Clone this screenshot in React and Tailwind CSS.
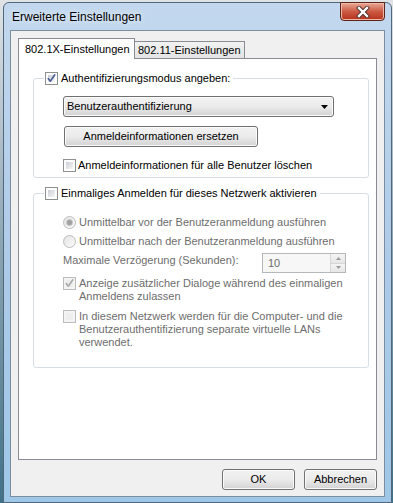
import React from 'react';

function CheckBox({ checked, disabled }) {
  return (
    <span
      className={
        disabled
          ? 'relative flex w-[13px] h-[13px] shrink-0 border border-[#bcbcbc] bg-[#f4f4f4] p-[2px]'
          : 'relative flex w-[13px] h-[13px] shrink-0 border border-[#8e8f8f] bg-white p-[2px]'
      }
    >
      <span
        className={
          disabled
            ? 'flex-1 bg-[#eeeeee]'
            : 'flex-1 bg-gradient-to-br from-[#cbcfd5] to-[#f6f6f6]'
        }
      />
      {checked && (
        <svg className="absolute left-0 top-0 w-[11px] h-[11px]" viewBox="0 0 11 11">
          <path
            d="M2.2 5.6 L4.3 8.2 L8.8 1.8"
            fill="none"
            stroke={disabled ? '#a9a9a9' : '#4a5f97'}
            strokeWidth="1.6"
            strokeLinecap="round"
            strokeLinejoin="round"
          />
        </svg>
      )}
    </span>
  );
}

function Radio({ checked }) {
  return (
    <span className="flex items-center justify-center w-[13px] h-[13px] shrink-0 rounded-full border border-[#bcbcbc] bg-gradient-to-br from-[#e4e4e4] to-[#fbfbfb]">
      {checked && (
        <span className="w-[5px] h-[5px] rounded-full bg-[#a0a0a0] shadow-[0_0_0_1px_#c8c8c8]" />
      )}
    </span>
  );
}

const btn =
  'flex items-center h-[21px] rounded-[3px] border border-[#707070] bg-gradient-to-b from-[#f2f2f2] via-[#ebebeb] to-[#d3d3d3] shadow-[inset_0_0_0_1px_#fbfbfb]';

export default function App() {
  return (
    <div className="w-[393px] h-[503px] overflow-hidden bg-gradient-to-b from-[#dfe3e6] via-[#8aa3b2] to-[#3f7186] pl-[3px] pt-[2px] font-['Liberation_Sans',Arial,sans-serif] text-[11px] text-black leading-none whitespace-nowrap">
      <div className="w-[389px] h-[501px] rounded-t-[6px] border border-[#52667c] bg-gradient-to-b from-[#c3d8ee] via-[#aecbe8] to-[#9ec7e8] flex flex-col px-[6px] pb-[5px]">
        {/* Title bar */}
        <div className="h-[27px] flex justify-between shrink-0">
          <span className="self-center pl-[2px] text-[12px] [text-shadow:0_0_6px_#ffffff]">Erweiterte Einstellungen</span>
          <div className="-mt-[1px] w-[45px] h-[19px] rounded-b-[4px] border border-[#5e2418] bg-gradient-to-b from-[#e7a896] via-[#cc5a43] to-[#b5301a] shadow-[inset_0_0_0_1px_#f0b8a8] flex items-center justify-center">
            <svg width="14" height="12" viewBox="0 0 14 12">
              <path d="M3 2 L11 10 M11 2 L3 10" stroke="#4a3030" strokeWidth="4.2" strokeLinecap="square" />
              <path d="M3 2 L11 10 M11 2 L3 10" stroke="#ffffff" strokeWidth="2.4" strokeLinecap="square" />
            </svg>
          </div>
        </div>

        {/* Client area */}
        <div className="flex-1 border border-[#7d8da0] bg-[#f0f0f0] flex flex-col px-[7px] pt-[7px]">
          {/* Tabs */}
          <div className="h-[20px] flex items-end shrink-0">
            <div className="relative z-10 w-[117px] h-[21px] -mb-[1px] border border-b-0 border-[#898c95] bg-white pl-[6px] flex items-center">
              802.1X-Einstellungen
            </div>
            <div className="w-[110px] h-[17px] border border-l-0 border-b-0 border-[#898c95] bg-gradient-to-b from-[#f2f2f2] to-[#e3e3e3] pl-[3px] flex items-center">
              802.11-Einstellungen
            </div>
          </div>

          {/* Tab page */}
          <div className="h-[402px] shrink-0 border border-[#898c95] bg-white pl-[14px] pt-[12px]">
            <fieldset className="w-[336px] border border-[#d5dfe5] rounded-[3px] pb-[4px]">
              <legend className="ml-[10px] px-[1px] h-[15px] flex items-center gap-[3px]">
                <CheckBox checked />
                <span className="pr-[2px]">Authentifizierungsmodus angeben:</span>
              </legend>
              <div className="pl-[29px] flex flex-col items-start">
                <div className={`${btn} mt-[10px] w-[271px] justify-between pl-[3px] pr-[5px]`}>
                  <span>Benutzerauthentifizierung</span>
                  <svg width="7" height="4" viewBox="0 0 7 4">
                    <path d="M0 0 H7 L3.5 4 Z" fill="#000" />
                  </svg>
                </div>
                <div className={`${btn} mt-[9px] ml-[1px] w-[194px] justify-center`}>Anmeldeinformationen ersetzen</div>
                <div className="mt-[11px] h-[15px] flex items-center gap-[2px]">
                  <CheckBox />
                  <span>Anmeldeinformationen für alle Benutzer löschen</span>
                </div>
              </div>
            </fieldset>

            <fieldset className="mt-[8px] w-[336px] border border-[#d5dfe5] rounded-[3px] pb-[18px]">
              <legend className="ml-[10px] px-[1px] h-[15px] flex items-center gap-[3px]">
                <CheckBox />
                <span className="pr-[2px]">Einmaliges Anmelden für dieses Netzwerk aktivieren</span>
              </legend>
              <div className="pl-[29px] mt-[12px] text-[#6d6d6d] flex flex-col">
                <div className="h-[19px] flex items-center gap-[3px]">
                  <Radio checked />
                  <span>Unmittelbar vor der Benutzeranmeldung ausführen</span>
                </div>
                <div className="h-[19px] flex items-center gap-[3px]">
                  <Radio />
                  <span>Unmittelbar nach der Benutzeranmeldung ausführen</span>
                </div>
                <div className="h-[19px] flex items-center">
                  <span className="w-[199px]">Maximale Verzögerung (Sekunden):</span>
                  <div className="mt-[5px] w-[84px] h-[20px] border border-[#b4b8bb] bg-[#f7f7f7] flex">
                    <span className="flex-1 pl-[5px] flex items-center">10</span>
                    <div className="w-[15px] flex flex-col border-l border-[#d6d6d6]">
                      <div className="flex-1 border-b border-[#d6d6d6] bg-gradient-to-b from-[#f4f4f4] to-[#e6e6e6] flex items-center justify-center">
                        <svg width="5" height="3" viewBox="0 0 5 3"><path d="M0 3 H5 L2.5 0 Z" fill="#9a9a9a" /></svg>
                      </div>
                      <div className="flex-1 bg-gradient-to-b from-[#f4f4f4] to-[#e6e6e6] flex items-center justify-center">
                        <svg width="5" height="3" viewBox="0 0 5 3"><path d="M0 0 H5 L2.5 3 Z" fill="#9a9a9a" /></svg>
                      </div>
                    </div>
                  </div>
                </div>
                <div className="mt-[7px] flex items-start gap-[3px] leading-[13px]">
                  <CheckBox checked disabled />
                  <span>
                    Anzeige zusätzlicher Dialoge während des einmaligen
                    <br />
                    Anmeldens zulassen
                  </span>
                </div>
                <div className="mt-[7px] flex items-start gap-[3px] leading-[13px]">
                  <CheckBox disabled />
                  <span>
                    In diesem Netzwerk werden für die Computer- und die
                    <br />
                    Benutzerauthentifizierung separate virtuelle LANs
                    <br />
                    verwendet.
                  </span>
                </div>
              </div>
            </fieldset>
          </div>

          {/* Dialog buttons */}
          <div className="mt-[9px] flex justify-end gap-[9px]">
            <div className={`${btn} w-[73px] justify-center border-[#3c7fb1] shadow-[inset_0_0_0_1px_#7fd3f6]`}>OK</div>
            <div className={`${btn} w-[73px] justify-center`}>Abbrechen</div>
          </div>
        </div>
      </div>
    </div>
  );
}
